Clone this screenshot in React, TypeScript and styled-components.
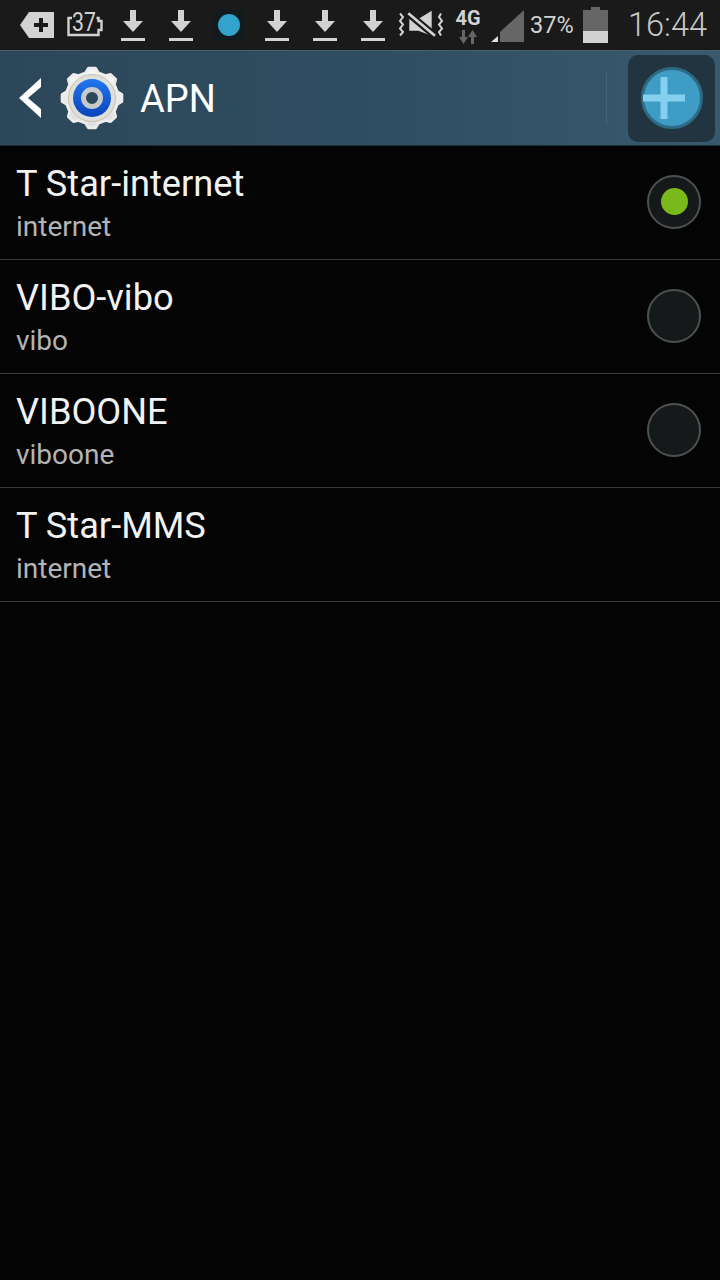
import React, { FC } from "react"
import styled, { createGlobalStyle } from "styled-components"

const apns = [
  { name: "T Star-internet", value: "internet", radio: "on" },
  { name: "VIBO-vibo", value: "vibo", radio: "off" },
  { name: "VIBOONE", value: "viboone", radio: "off" },
  { name: "T Star-MMS", value: "internet", radio: "none" },
]

const DownloadIcon: FC = () => (
  <svg width="26" height="34" viewBox="0 0 26 34">
    <path d="M10 2h6v11h7L13 24 3 13h7z" fill="#d2d2d2" />
    <rect x="1" y="30" width="24" height="3" fill="#d2d2d2" />
  </svg>
)

const gearPath = () => {
  // 8 wide teeth around the centre
  const pts: string[] = []
  const n = 8
  for (let i = 0; i < n; i++) {
    const a = (i / n) * Math.PI * 2 - Math.PI / 2
    const step = Math.PI / n
    const p = (r: number, t: number) =>
      `${(32 + r * Math.cos(t)).toFixed(2)} ${(32 + r * Math.sin(t)).toFixed(2)}`
    pts.push(p(26, a - step * 0.62), p(30, a - step * 0.3), p(30, a + step * 0.3), p(26, a + step * 0.62))
  }
  return `M${pts.join("L")}Z`
}

const GearIcon: FC = () => (
  <svg width="64" height="64" viewBox="0 0 64 64">
    <defs>
      <linearGradient id="gearBody" x1="0" y1="0" x2="0" y2="1">
        <stop offset="0" stopColor="#f8f8f8" />
        <stop offset="1" stopColor="#dcdcdc" />
      </linearGradient>
      <linearGradient id="gearBlue" x1="0" y1="0" x2="0" y2="1">
        <stop offset="0" stopColor="#2277ee" />
        <stop offset="1" stopColor="#0a44bc" />
      </linearGradient>
    </defs>
    <path d={gearPath()} fill="url(#gearBody)" stroke="#ececec" strokeWidth="3" strokeLinejoin="round" />
    <circle cx="32" cy="32" r="23.500" fill="#dededa" stroke="#c9c2ad" strokeWidth="1" />
    <circle cx="32" cy="32" r="19" fill="url(#gearBlue)" />
    <circle cx="32" cy="32" r="8.500" fill="#2c4759" stroke="#c6cacc" strokeWidth="5" />
  </svg>
)

const App: FC = () => (
  <Screen>
    <GlobalStyle />
    <StatusBar>
      <IconSlot>
        <svg width="34" height="26" viewBox="0 0 34 26">
          <path d="M9 0h25v26H9L0 13z" fill="#d2d2d2" />
          <path d="M19 6h4v5h5v4h-5v5h-4v-5h-5v-4h5z" fill="#1a1a1a" />
        </svg>
      </IconSlot>
      <IconSlot>
        <BatteryNumber>
          <svg width="36" height="24" viewBox="0 0 36 24">
            <path d="M5 5H1.500v17h30v-5h3V8h-3V5h-2" fill="none" stroke="#d2d2d2" strokeWidth="2.4" />
          </svg>
          <BatteryDigits>37</BatteryDigits>
        </BatteryNumber>
      </IconSlot>
      <IconSlot><DownloadIcon /></IconSlot>
      <IconSlot><DownloadIcon /></IconSlot>
      <IconSlot>
        <DotBox><Dot /></DotBox>
      </IconSlot>
      <IconSlot><DownloadIcon /></IconSlot>
      <IconSlot><DownloadIcon /></IconSlot>
      <IconSlot><DownloadIcon /></IconSlot>
      <IconSlot>
        <svg width="48" height="30" viewBox="0 0 48 30">
          <path d="M12.300 9h9l13.400-8.300v25l-13.400-5h-9z" fill="#d2d2d2" />
          <path d="M9 1.500l31 26" stroke="#1a1a1a" strokeWidth="7" />
          <path d="M11.300 3.300L38 25.700" stroke="#d2d2d2" strokeWidth="2.800" />
          <path
            d="M3 3.500l3 3.500-3 4 3 3.500-3 4 3 3.500-3 3.500M44 3.500l-2 3.500 3 4-3 3.500 3 4-3 3.500 2 3.500"
            fill="none"
            stroke="#d2d2d2"
            strokeWidth="2"
          />
        </svg>
      </IconSlot>
      <IconSlot>
        <NetworkBox>
          <NetworkLabel>4G</NetworkLabel>
          <svg width="20" height="14" viewBox="0 0 20 14">
            <path d="M4 0h3v7h3l-4.500 7L1 7h3z" fill="#666" />
            <path d="M13 14h3V7h3l-4.500-7L10 7h3z" fill="#666" />
          </svg>
        </NetworkBox>
      </IconSlot>
      <Signal>
        <svg width="33" height="32" viewBox="0 0 33 32">
          <path d="M9 32V22L33 0v32z" fill="#666" />
          <path d="M0 32l7-6v6z" fill="#e0e0e0" />
        </svg>
      </Signal>
      <Percent>37%</Percent>
      <Battery>
        <BatteryCap />
        <BatteryBody>
          <BatteryLevel />
        </BatteryBody>
      </Battery>
      <Clock>16:44</Clock>
    </StatusBar>

    <ActionBar>
      <BackIcon>
        <svg width="24" height="40" viewBox="0 0 24 40">
          <path d="M22 0v9L9 20l13 11v9L0 20z" fill="#fff" />
        </svg>
      </BackIcon>
      <GearIcon />
      <Title>APN</Title>
      <Divider />
      <AddButton>
        <AddCircle>
          <AddPlus width="42" height="42" viewBox="0 0 42 42">
            <path d="M17.500 0h7v17.500H42v7H24.500V42h-7V24.500H0v-7h17.500z" fill="#85d0ee" />
          </AddPlus>
        </AddCircle>
      </AddButton>
    </ActionBar>

    <List>
      {apns.map((apn) => (
        <Row key={apn.name}>
          <RowText>
            <RowName>{apn.name}</RowName>
            <RowValue>{apn.value}</RowValue>
          </RowText>
          {apn.radio !== "none" && (
            <Radio>{apn.radio === "on" && <RadioDot />}</Radio>
          )}
        </Row>
      ))}
    </List>
  </Screen>
)

export default App

const GlobalStyle = createGlobalStyle`
  html, body {
    margin: 0;
    padding: 0;
    background: #040404;
  }
`

const Screen = styled.div`
  width: 720px;
  height: 1280px;
  overflow: hidden;
  background: #040404;
  font-family: Roboto, "Liberation Sans", sans-serif;
`

const StatusBar = styled.div`
  display: flex;
  align-items: center;
  height: 50px;
  padding-left: 13px;
  background: #1a1a1a;
  box-sizing: border-box;
`

const IconSlot = styled.div`
  display: flex;
  align-items: center;
  justify-content: center;
  flex: none;
  width: 48px;
  height: 50px;
`

const BatteryNumber = styled.div`
  position: relative;
  width: 36px;
  height: 24px;
`

const BatteryDigits = styled.span`
  position: absolute;
  top: -4px;
  left: 3px;
  color: #d2d2d2;
  font-size: 25px;
  line-height: 28px;
  transform: scaleX(0.85);
`

const DotBox = styled.div`
  display: flex;
  align-items: center;
  justify-content: center;
  width: 30px;
  height: 30px;
  background: #111a1c;
`

const Dot = styled.div`
  width: 22px;
  height: 22px;
  border-radius: 50%;
  background: #33a2cc;
`

const NetworkBox = styled.div`
  display: flex;
  flex-direction: column;
  align-items: center;
  gap: 2px;
  margin: 2px 2px 0 0;
`

const NetworkLabel = styled.span`
  color: #d2d2d2;
  font-size: 20px;
  line-height: 20px;
  font-weight: 700;
`

const Signal = styled.div`
  display: flex;
  flex: none;
  width: 33px;
  margin-left: -2px;
  padding-top: 1px;
`

const Percent = styled.span`
  flex: none;
  width: 44px;
  margin-left: 6px;
  color: #d2d2d2;
  font-size: 23.500px;
  white-space: nowrap;
`

const Battery = styled.div`
  display: flex;
  flex-direction: column;
  align-items: center;
  flex: none;
  width: 25px;
  margin-left: 9px;
`

const BatteryCap = styled.div`
  width: 9px;
  height: 3px;
  background: #666;
`

const BatteryBody = styled.div`
  display: flex;
  align-items: flex-end;
  width: 25px;
  height: 33px;
  background: #666;
`

const BatteryLevel = styled.div`
  width: 100%;
  height: 12px;
  background: #d2d2d2;
`

const Clock = styled.span`
  flex: none;
  margin-left: 20px;
  color: #c8c8c8;
  font-size: 32.500px;
  font-weight: 300;
`

const ActionBar = styled.div`
  display: flex;
  align-items: center;
  height: 96px;
  box-sizing: border-box;
  padding: 1px 0 1px 19px;
  border-top: 1px solid #4a5f6c;
  border-bottom: 1px solid #1c2e3a;
  background: linear-gradient(90deg, #2c4759, #2f4d61 50%, #38596e);
`

const BackIcon = styled.div`
  display: flex;
  width: 24px;
  margin-right: 17px;
`

const Title = styled.span`
  flex: 1;
  margin-left: 16px;
  padding-top: 2px;
  color: #fff;
  font-size: 38px;
  font-weight: 400;
`

const Divider = styled.div`
  width: 1px;
  height: 54px;
  background: #456173;
`

const AddButton = styled.div`
  display: flex;
  align-items: center;
  justify-content: center;
  width: 87px;
  height: 87px;
  margin: 0 5px 0 21px;
  border-radius: 10px;
  background: #223440;
`

const AddCircle = styled.div`
  display: flex;
  align-items: center;
  justify-content: center;
  width: 62px;
  height: 62px;
  padding-right: 16px;
  box-sizing: border-box;
  border: 3px solid #2d6a86;
  border-radius: 50%;
  background: #3f9cc4;
`

const AddPlus = styled.svg`
  flex: none;
`

const List = styled.div`
  display: flex;
  flex-direction: column;
`

const Row = styled.div`
  display: flex;
  align-items: center;
  justify-content: space-between;
  height: 114px;
  padding: 0 19px 2px 16px;
  border-bottom: 1px solid #3a3a3a;
  box-sizing: border-box;
`

const RowText = styled.div`
  display: flex;
  flex-direction: column;
  padding-top: 4px;
`

const RowName = styled.span`
  color: #f2f2f2;
  font-size: 36.200px;
  line-height: 44px;
`

const RowValue = styled.span`
  margin-top: 3px;
  color: #b4b4b4;
  font-size: 28px;
  line-height: 36px;
`

const Radio = styled.div`
  display: flex;
  align-items: center;
  justify-content: center;
  width: 54px;
  height: 54px;
  border: 2px solid #4e5152;
  border-radius: 50%;
  background: #15191a;
  box-sizing: border-box;
`

const RadioDot = styled.div`
  width: 27px;
  height: 27px;
  border-radius: 50%;
  background: #7ab91a;
`
